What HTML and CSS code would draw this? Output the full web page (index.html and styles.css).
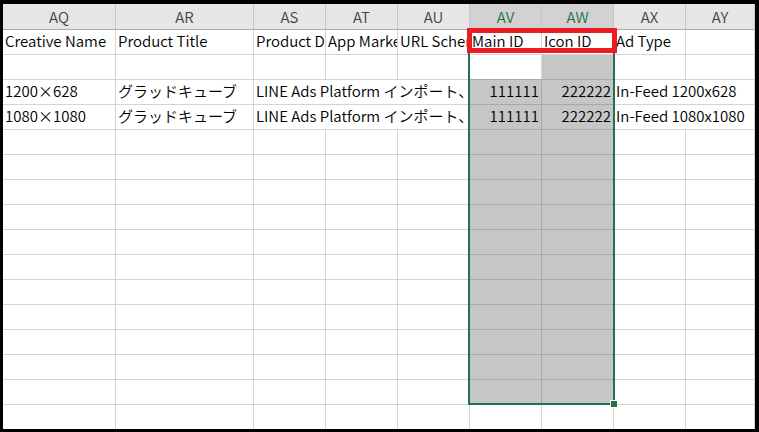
FILE: index.html
```html
<!DOCTYPE html>
<html lang="ja">
<head>
    <meta charset="UTF-8">
    <title>Sheet</title>
    <link rel="stylesheet" href="styles.css">
</head>
<body>

<div class="frame">
    <div class="sheet">
        <div class="grid">
            <div class="head">AQ</div>
            <div class="head">AR</div>
            <div class="head">AS</div>
            <div class="head">AT</div>
            <div class="head">AU</div>
            <div class="head picked">AV</div>
            <div class="head picked">AW</div>
            <div class="head">AX</div>
            <div class="head">AY</div>

            <div class="cell">Creative Name</div>
            <div class="cell">Product Title</div>
            <div class="cell">Product Description</div>
            <div class="cell">App Market URL</div>
            <div class="cell">URL Scheme</div>
            <div class="cell">Main ID</div>
            <div class="cell">Icon ID</div>
            <div class="cell">Ad Type</div>
            <div class="cell"></div>

            <div class="cell"></div>
            <div class="cell"></div>
            <div class="cell"></div>
            <div class="cell"></div>
            <div class="cell"></div>
            <div class="cell active"></div>
            <div class="cell sel"></div>
            <div class="cell"></div>
            <div class="cell"></div>

            <div class="cell">1200×628</div>
            <div class="cell">グラッドキューブ</div>
            <div class="cell span3">LINE Ads Platform インポート、</div>
            <div class="cell sel num">111111</div>
            <div class="cell sel num">222222</div>
            <div class="cell span2">In-Feed 1200x628</div>

            <div class="cell">1080×1080</div>
            <div class="cell">グラッドキューブ</div>
            <div class="cell span3">LINE Ads Platform インポート、</div>
            <div class="cell sel num">111111</div>
            <div class="cell sel num">222222</div>
            <div class="cell span2">In-Feed 1080x1080</div>
        </div>

        <div class="grid blank" id="blank"></div>

        <div class="selection">
            <span class="handle"></span>
        </div>
        <div class="callout"></div>
    </div>
</div>

<script>
    const blank = document.getElementById("blank");
    for (let r = 0; r < 12; r++) {
        for (let c = 0; c < 9; c++) {
            const cell = document.createElement("div");
            cell.className = "cell";
            if (r < 11 && (c === 5 || c === 6)) {
                cell.className = "cell sel";
            }
            blank.appendChild(cell);
        }
    }
</script>

</body>
</html>
```

FILE: styles.css
```css
body {
    margin: 0;
    padding: 0;
    background-color: #000000;
    font-family: 'Noto Sans CJK JP', 'Noto Sans', sans-serif;
    font-size: 15px;
    font-weight: 350;
    color: #000000;
}

.frame {
    width: 759px;
    height: 432px;
    padding: 4px 4px 3px 3px;
    box-sizing: border-box;
}

.sheet {
    position: relative;
    height: 100%;
    background: #ffffff;
    overflow: hidden;
}

.grid {
    display: grid;
    grid-template-columns: 113px 138px 72px 72px 72px 72px 72px 72px 1fr;
    grid-auto-rows: 25px;
}

.grid:first-child {
    grid-template-rows: 26px;
}

.head {
    height: 26px;
    line-height: 25px;
    box-sizing: border-box;
    text-align: center;
    background: #e6e6e6;
    color: #444444;
    border-right: 1px solid #c6c6c6;
    border-bottom: 1px solid #ababab;
}

.head.picked {
    background: #d2d2d2;
    color: #217346;
}

.cell {
    box-sizing: border-box;
    height: 25px;
    line-height: 21px;
    padding: 0 2px;
    white-space: nowrap;
    overflow: hidden;
    border-right: 1px solid #d4d4d4;
    border-bottom: 1px solid #d4d4d4;
}

.cell.sel {
    background: #c6c6c6;
    border-color: #a8a8a8;
}

.cell.active {
    border-bottom-color: #a8a8a8;
}

.num {
    text-align: right;
}

.span3 {
    grid-column: span 3;
}

.span2 {
    grid-column: span 2;
}

.selection {
    position: absolute;
    left: 465px;
    top: 24px;
    width: 147px;
    height: 377px;
    box-sizing: border-box;
    border: 2px solid #217346;
}

.handle {
    position: absolute;
    right: -5px;
    bottom: -5px;
    width: 6px;
    height: 6px;
    background: #217346;
    border: 1px solid #ffffff;
}

.callout {
    position: absolute;
    left: 464px;
    top: 24px;
    width: 150px;
    height: 25px;
    box-sizing: border-box;
    border: 5px solid #ed1c24;
}
```
